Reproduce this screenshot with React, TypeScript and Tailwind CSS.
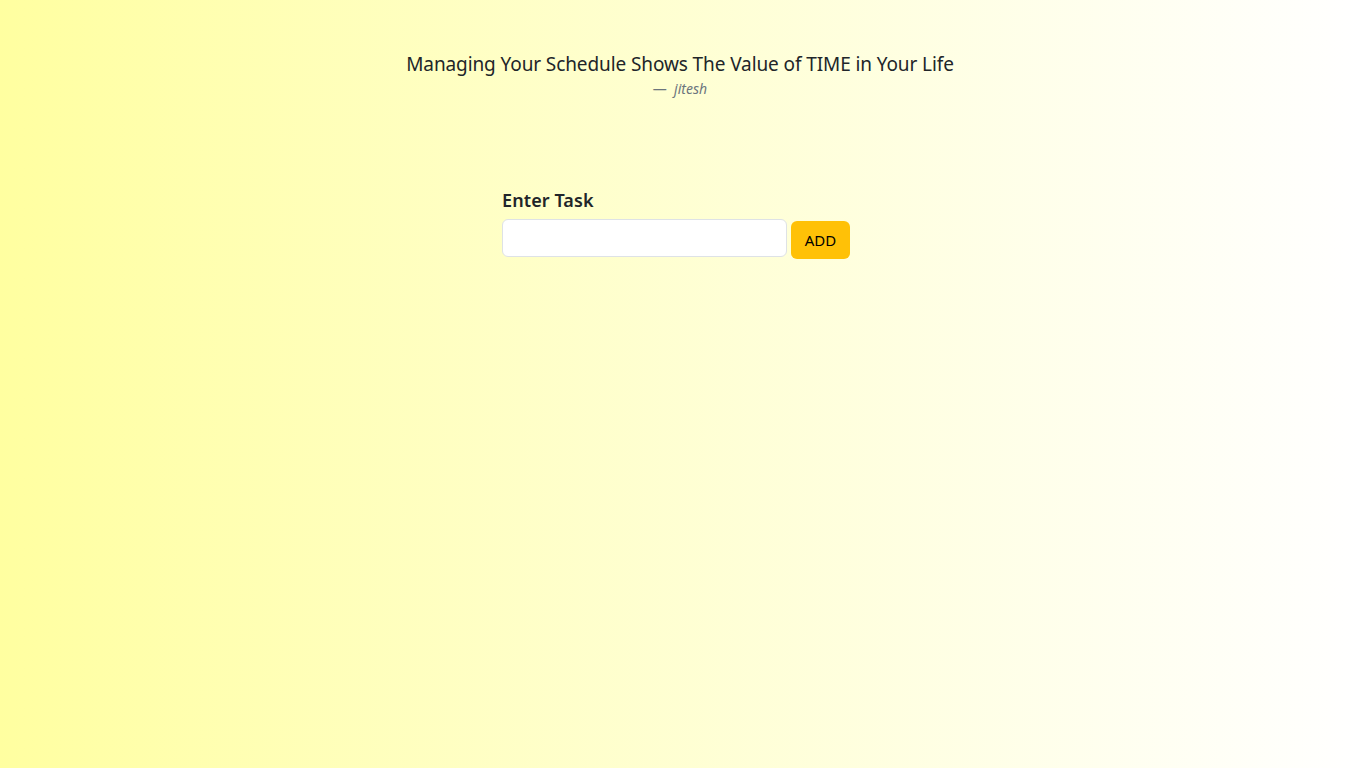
export default function App() {
  return (
    <div
      className="min-h-[768px] w-full bg-gradient-to-r from-[#ffffa0] to-white text-[#212529]"
      style={{ fontFamily: '"Noto Sans", "Open Sans", sans-serif' }}
    >
      <div className="pt-[49px] flex flex-col items-center">
        <p className="text-[19px] leading-[30px] tracking-[-0.1px]">Managing Your Schedule Shows The Value of TIME in Your Life</p>
        <p className="text-[14px] leading-[20px] text-[#6c757d] italic mt-0">
          <span className="not-italic">—</span>&nbsp; jitesh
        </p>
      </div>
      <div className="flex justify-center mt-[89px]">
        <div className="w-[356px]">
          <h5 className="text-[18px] font-semibold leading-[24px] tracking-[0.1px]">Enter Task</h5>
          <div className="flex items-start gap-[4px] mt-[7px]">
            <input
              type="text"
              className="w-[285px] h-[38px] bg-white border border-[#dee2e6] rounded-[6px] px-3 outline-none"
            />
            <button className="mt-[2px] w-[59px] h-[38px] rounded-[6px] bg-[#ffc107] text-[15px] text-black">
              ADD
            </button>
          </div>
        </div>
      </div>
    </div>
  );
}
